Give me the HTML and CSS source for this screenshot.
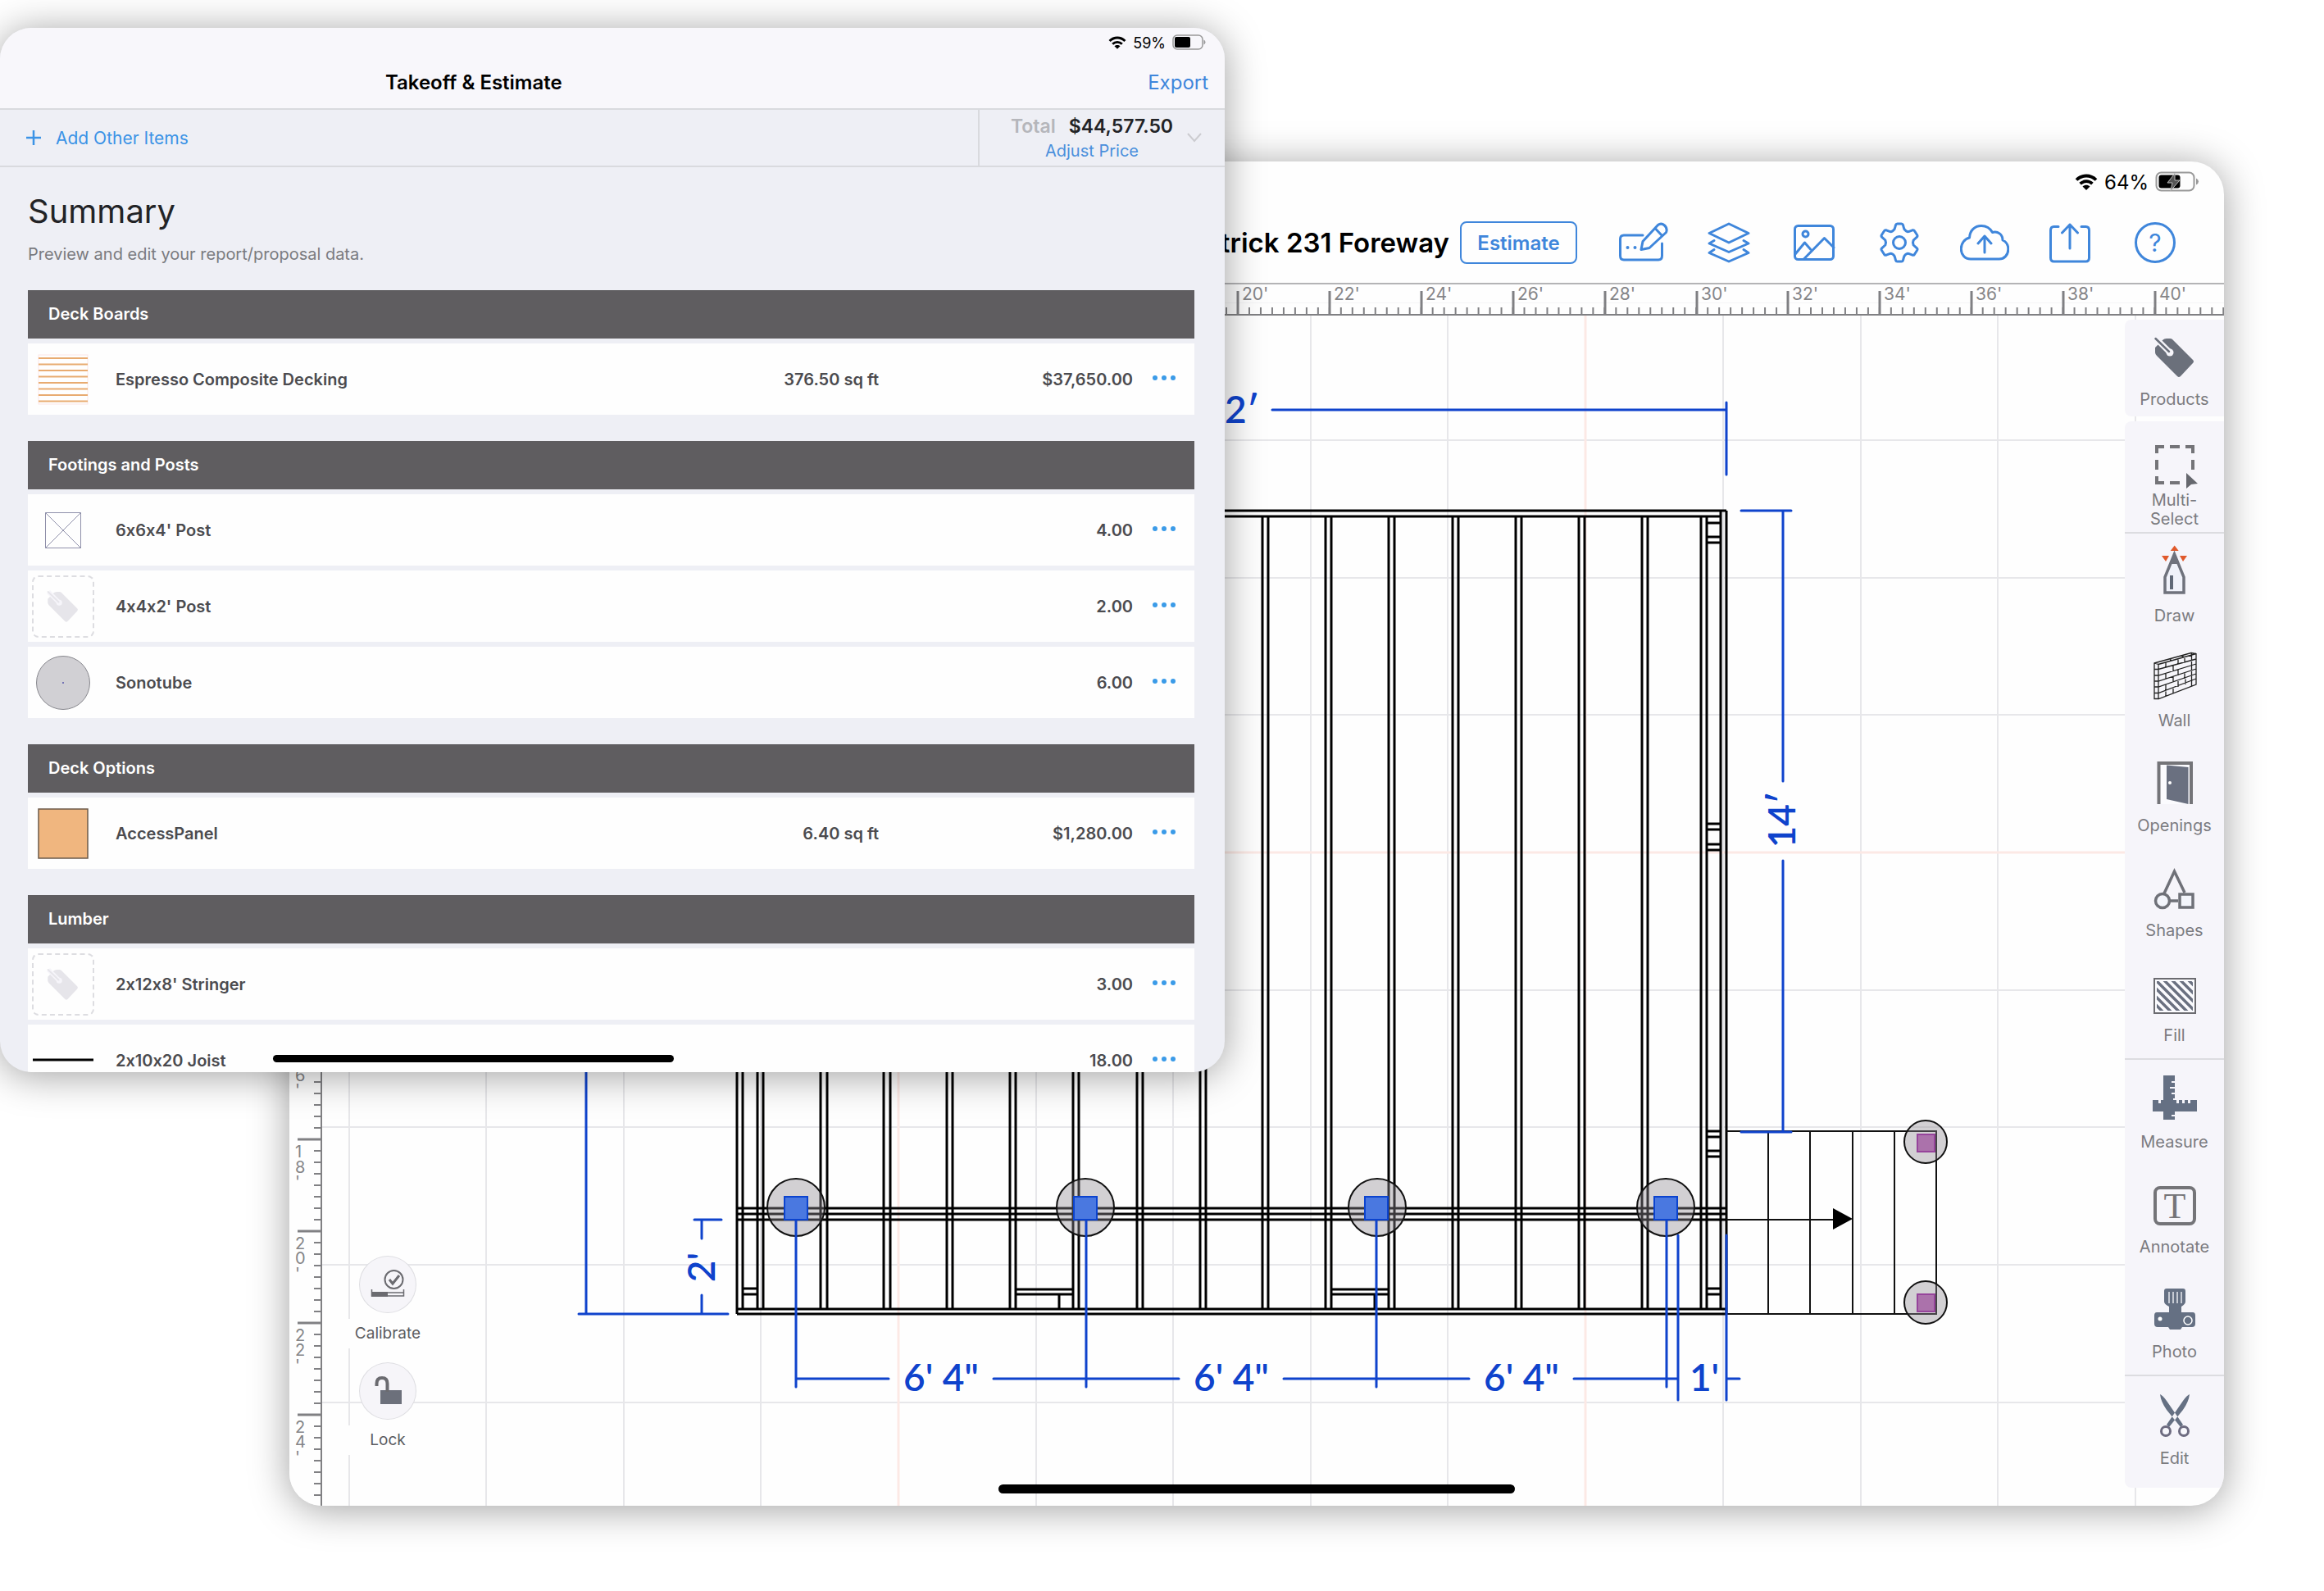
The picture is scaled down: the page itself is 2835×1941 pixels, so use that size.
FILE: index.html
```html
<!DOCTYPE html>
<html lang="en">
<head>
<meta charset="utf-8">
<title>Takeoff &amp; Estimate</title>
<link rel="stylesheet" href="styles.css">
</head>
<body>
<svg class="defs" aria-hidden="true">
  <defs>
    <symbol id="wifi" viewBox="0 0 28 20">
      <path d="M2 7.500C9 .8 19 .8 26 7.500M6.600 12.200c4.300-4 10.500-4 14.800 0" fill="none" stroke="currentColor" stroke-width="3.800"/>
      <path d="M14 20l-4.500-4.600c2.500-2.200 6.500-2.200 9 0z" fill="currentColor"/>
    </symbol>
    <symbol id="tag" viewBox="0 0 64 64">
      <path d="M17 11q2-2 5-2h4q2 0 3 1l25 25q2 2 0 4L39 55q-2 2-4 0L10 30q-2-2-2-4v-6z" fill="currentColor"/>
      <circle cx="26" cy="26" r="4.500" class="tag-gap-fill"/>
      <path d="M9 9l17 17" class="tag-gap" stroke-width="7"/>
      <path d="M8.500 9L25 25" stroke="currentColor" stroke-width="2.500" stroke-linecap="round"/>
    </symbol>
    <symbol id="dots" viewBox="0 0 30 8">
      <circle cx="4" cy="4" r="3" fill="currentColor"/><circle cx="15" cy="4" r="3" fill="currentColor"/><circle cx="26" cy="4" r="3" fill="currentColor"/>
    </symbol>
  </defs>
</svg>

<main class="desktop">
  <section class="plan" aria-label="Plan editor">
    <div class="status status-large">
      <svg class="wifi-large"><use href="#wifi"/></svg>
      <span>64%</span>
      <svg class="battery-large" viewBox="0 0 54 26">
        <rect x="1.500" y="1.500" width="46" height="22" rx="6" fill="none" stroke="#999" stroke-width="2"/>
        <rect x="4.500" y="4.500" width="26" height="16" rx="3" fill="#000"/>
        <path d="M50 8.500q3 1.500 3 4t-3 4z" fill="#999"/>
        <path d="M24 2.500L15 14h6l-2 9.500L30 11h-6z" fill="#555" stroke="#bbb" stroke-width="1"/>
      </svg>
    </div>
    <header class="plan-nav">
      <h2 class="plan-title">Patrick 231 Foreway</h2>
      <button class="estimate" type="button">Estimate</button>
      <nav class="plan-actions" aria-label="Plan actions">
        <button type="button" aria-label="Rename"><svg viewBox="0 0 60 60"><path d="M29 21H6q-4.500 0-4.500 4.500V46q0 5 4.500 5h42q4.500 0 4.500-5V31"/><path d="M27 38.500l2-10L47.500 8.500q4-3 8 .5t2 8.500L37 36.500zM44 12.500l8.500 9"/><circle class="solid" cx="10.500" cy="36" r="2"/><circle class="solid" cx="19.500" cy="36" r="2"/></svg></button>
        <button type="button" aria-label="Layers"><svg viewBox="0 0 60 60"><path d="M30 7l24 11.500L30 30 6 18.500zM12 27.500l-6 3.500 24 10.500L54 31l-6-3.500M12 38.500L6 42.500 30 53l24-10.500-6-4"/></svg></button>
        <button type="button" aria-label="Images"><svg viewBox="0 0 60 60"><rect x="6.500" y="9.500" width="47" height="41" rx="4"/><circle cx="19.500" cy="19.500" r="3.500"/><path d="M7 44l11.500-14 7 8M17.500 50L42.500 24.500 54 36"/></svg></button>
        <button type="button" aria-label="Settings"><svg viewBox="0 0 60 60"><path d="M24 13.600Q25 11 25.500 8.500q.5-1.600 2-1.600h5q1.500 0 2 1.600Q35 11 36 13.600q2.500 3.400 5.200 3L46 14.800q1.700-.5 2.500 1l3.200 5q.8 1.400-.5 2.600L47.200 27q-1.400 3 0 6l4 3.600q1.300 1.200.5 2.600l-3.200 5q-.8 1.500-2.500 1l-4.800-1.800q-2.700-.4-5.200 3-1 2.600-1.500 5.100-.5 1.600-2 1.600h-5q-1.500 0-2-1.600-.5-2.500-1.500-5.100-2.500-3.400-5.200-3L14 45.200q-1.700.5-2.500-1l-3.200-5q-.8-1.400.5-2.600l4-3.600q1.400-3 0-6l-4-3.600q-1.300-1.200-.5-2.600l3.200-5q.8-1.500 2.500-1l4.800 1.800q2.700.4 5.200-3z"/><circle cx="30" cy="30" r="7.500"/></svg></button>
        <button type="button" aria-label="Upload"><svg viewBox="0 0 60 60"><path d="M13 50C5.500 50 1.300 44 1.300 37.500S5.500 25.500 11.500 24C12 15 18 9.500 26 9.500c6.500 0 11 3.500 13.500 8C46 15.500 52 20 52 27c4.500 2 6.800 6 6.800 11 0 7-4.800 12-11 12zM30 42V22M22 31l8-9 8 9"/></svg></button>
        <button type="button" aria-label="Share"><svg viewBox="0 0 60 60"><path d="M16 10.500h-5.500Q6.500 10.500 6.500 15v33.500q0 4.500 4 4.500h39q4 0 4-4.500V15q0-4.500-4-4.500H44M30 37V8M20.500 18L30 8l9.500 10"/></svg></button>
        <button type="button" aria-label="Help"><svg viewBox="0 0 60 60"><circle cx="30" cy="30" r="23.500"/><text x="30" y="41" text-anchor="middle">?</text></svg></button>
      </nav>
    </header>
    <svg class="ruler-top" aria-hidden="true">
      <defs><pattern id="tickx" patternUnits="userSpaceOnUse" x="1156" y="0" width="13.980" height="38"><rect x="0" y="28" width="2" height="10"/></pattern></defs>
      <rect x="0" y="22" width="100%" height="1" fill="#f4f4f6"/>
      <rect width="100%" height="38" fill="url(#tickx)"/>
      <rect y="36" width="100%" height="2"/>
      <path d="M1157 8v30M1269 8v30M1381 8v30M1493 8v30M1605 8v30M1717 8v30M1828 8v30M1940 8v30M2052 8v30M2164 8v30M2276 8v30"/>
      <text x="1162" y="19">20'</text><text x="1274" y="19">22'</text><text x="1386" y="19">24'</text><text x="1498" y="19">26'</text><text x="1610" y="19">28'</text><text x="1722" y="19">30'</text><text x="1833" y="19">32'</text><text x="1945" y="19">34'</text><text x="2057" y="19">36'</text><text x="2169" y="19">38'</text><text x="2281" y="19">40'</text>
    </svg>
    <div class="plan-body">
      <svg class="drawing" viewBox="353 385 2360 1452" preserveAspectRatio="xMidYMid slice" role="img" aria-label="Deck framing plan">
        <g class="grid">
          <path d="M426 385V1837M593 385V1837M761 385V1837M928 385V1837M1264 385V1837M1431 385V1837M1599 385V1837M1766 385V1837M2102 385V1837M2270 385V1837M2437 385V1837M2605 385V1837M393 537H2713M393 705H2713M393 872H2713M393 1208H2713M393 1375H2713M393 1543H2713M393 1711H2713"/>
          <path class="axis" d="M1096 385V1837M1934 385V1837M393 1040H2713"/>
        </g>
        <g class="frame">
          <path d="M899 623H2106M899 630H2099M899 1597H2106M899 1603H2106"/>
          <path d="M899 623V1603M906 630V1597M924 630V1597M931 630V1597M2106 623V1603M2099 623V1597M2082 630V1597M2075 630V1597"/>
          <path d="M1001 630V1597M1009 630V1597M1078 630V1597M1086 630V1597M1155 630V1597M1162 630V1597M1232 630V1597M1239 630V1597M1309 630V1597M1316 630V1597M1387 630V1597M1394 630V1597M1464 630V1597M1471 630V1597M1540 630V1597M1547 630V1597M1617 630V1597M1624 630V1597M1694 630V1597M1701 630V1597M1772 630V1597M1779 630V1597M1849 630V1597M1856 630V1597M1926 630V1597M1933 630V1597M2003 630V1597M2010 630V1597"/>
          <path d="M899 1474H2106M899 1481H2106M899 1488H2106"/>
          <path d="M906 1572h18M906 1579h18M1239 1573h70M1239 1579h70M1292 1579v18M1624 1573h70M1624 1579h70M1677 1579v18"/>
          <path d="M2082 638h17M2082 655h17M2082 662h17M2082 1005h17M2082 1012h17M2082 1030h17M2082 1037h17M2082 1380h17M2082 1387h17M2082 1404h17M2082 1411h17M2082 1572h17M2082 1579h17"/>
        </g>
        <g class="stairs">
          <path d="M2106 1380H2362V1603H2106M2157 1380V1603M2208 1380V1603M2260 1380V1603M2311 1380V1603M2106 1488H2240"/>
          <path class="arrow" d="M2236 1474L2260 1487 2236 1500z"/>
        </g>
        <g class="footing">
          <circle cx="971" cy="1473" r="35"/><circle cx="1324" cy="1473" r="35"/><circle cx="1680" cy="1473" r="35"/><circle cx="2032" cy="1473" r="35"/>
          <circle cx="2349" cy="1393" r="26"/><circle cx="2349" cy="1589" r="26"/>
        </g>
        <g class="post">
          <rect x="957" y="1460" width="28" height="28"/><rect x="1310" y="1460" width="28" height="28"/><rect x="1665" y="1460" width="28" height="28"/><rect x="2018" y="1460" width="28" height="28"/>
        </g>
        <g class="post stair-post"><rect x="2339" y="1384" width="21" height="21"/><rect x="2339" y="1579" width="21" height="21"/></g>
        <g class="dims">
          <path d="M1552 500H2106M2106 491V579M2124 623H2185M2175 623V953M2175 1050V1380M2124 1381H2185M715 623V1603M706 1603H888M847 1488H880M856 1488V1511M856 1580V1603"/>
          <path d="M971 1682H1084M1212 1682H1438M1566 1682H1792M1920 1682H2047M2106 1682H2122M971 1489V1692M1325 1489V1692M1679 1489V1692M2033 1489V1692M2047 1507V1708M2106 1507V1708"/>
          <text x="1536" y="516" text-anchor="end">22′</text>
          <text x="1148" y="1697" text-anchor="middle">6' 4"</text>
          <text x="1502" y="1697" text-anchor="middle">6' 4"</text>
          <text x="1856" y="1697" text-anchor="middle">6' 4"</text>
          <text x="2079" y="1697" text-anchor="middle">1'</text>
          <text transform="translate(2190 1000) rotate(-90)" text-anchor="middle">14′</text>
          <text transform="translate(872 1546) rotate(-90)" text-anchor="middle">2'</text>
        </g>
      </svg>
      <svg class="ruler-side" aria-hidden="true">
        <defs><pattern id="ticky" patternUnits="userSpaceOnUse" x="0" y="1004" width="40" height="14"><rect x="30" y="0" width="10" height="2"/></pattern></defs>
        <rect width="40" height="100%" fill="url(#ticky)"/>
        <rect x="38" width="2" height="100%"/>
        <path d="M10 893h30M10 1005h30M10 1117h30M10 1229h30M10 1341h30"/>
        <text><tspan x="7" y="915">1</tspan><tspan x="7" y="934">6</tspan><tspan x="7" y="952">'</tspan></text>
        <text><tspan x="7" y="1027">1</tspan><tspan x="7" y="1046">8</tspan><tspan x="7" y="1064">'</tspan></text>
        <text><tspan x="7" y="1139">2</tspan><tspan x="7" y="1157">0</tspan><tspan x="7" y="1176">'</tspan></text>
        <text><tspan x="7" y="1251">2</tspan><tspan x="7" y="1269">2</tspan><tspan x="7" y="1288">'</tspan></text>
        <text><tspan x="7" y="1363">2</tspan><tspan x="7" y="1381">4</tspan><tspan x="7" y="1400">'</tspan></text>
      </svg>
      <div class="floating">
        <button type="button"><svg viewBox="0 0 68 68"><circle cx="41.500" cy="28" r="11" fill="none" stroke="#6b6b70" stroke-width="2"/><path d="M36 28l4 5 8-10" fill="none" stroke="#6b6b70" stroke-width="3"/><path d="M14.500 40v8h39v-8M14 44h40" fill="none" stroke="#6b6b70" stroke-width="1.500"/><rect x="14" y="43" width="20" height="6" fill="#6b6b70"/></svg><span>Calibrate</span></button>
        <button type="button"><svg viewBox="0 0 68 68"><rect x="25" y="33" width="26" height="17" fill="#6c707b"/><path d="M20.500 28v-3q0-7 6.500-7t6.500 7v10" fill="none" stroke="#6b6b70" stroke-width="4"/></svg><span>Lock</span></button>
      </div>
      <aside class="tools" aria-label="Tools">
        <div class="tools-card tools-products">
          <button class="tool" type="button"><svg viewBox="0 0 64 64"><use href="#tag"/></svg><span>Products</span></button>
        </div>
        <div class="tools-card tools-main">
          <div class="tool-group">
            <button class="tool tool-multi" type="button"><svg viewBox="0 0 64 64"><path d="M10 18v-8h9M26 10h12M45 10h9v8M54 26v12M10 26v12M10 46v8h9M26 54h12" fill="none" stroke="#747478" stroke-width="4"/><path d="M46 42l14 13-8 1-6 5z" fill="#66686e"/></svg><span>Multi-<br>Select</span></button>
          </div>
          <div class="tool-group">
            <button class="tool" type="button"><svg viewBox="0 0 64 64"><path d="M31.700-1.500l5 6.500h-10zM16 11h9l-4 7zM38 11h9l-5 7z" fill="#e0592b"/><path d="M31.500 9L20 37v19h23V37z" fill="#f0f2fa" stroke="#6f727c" stroke-width="3.500"/><path d="M31.500 7l-6 14h12z" fill="#6f727c"/><rect x="26" y="35" width="4" height="17" fill="#5f6877"/></svg><span>Draw</span></button>
            <button class="tool" type="button"><svg viewBox="0 0 64 64"><path d="M7 14L52 1.500l6 1V40L12.500 57.500H7zM7 14l5 1.500v42M12 15.500L58 2.500M7 21.500h5L58 9M7 29h5l46-14M7 36h5l46-15M7 43h5l46-16M7 50.500h5L58 33M52.500 1.500V42M27 8.500v2.500M42 4.500V7M21 19v-6M36 15V8.500M30 24v-7M44 13.500V6.500M21 26.500v7M36 22v7M30 30.500v7M44 26.500v6.500M21 40.500v7M36 36v7M30 45v6.500M45 33.500v6.500M21 48.500v6" fill="none" stroke="#222" stroke-width="1.300"/></svg><span>Wall</span></button>
            <button class="tool" type="button"><svg viewBox="0 0 64 64"><rect x="14" y="8" width="36" height="50" fill="#fbfbfe"/><path d="M12.500 58V8h39.500v50" fill="none" stroke="#747478" stroke-width="4"/><path d="M22 10.500l26.500 2.500v45L22 52z" fill="#6a7080"/><circle cx="26" cy="32" r="2" fill="#fff"/></svg><span>Openings</span></button>
            <button class="tool" type="button"><svg viewBox="0 0 64 64"><path d="M19 39L31.500 12 44 38M26 48h10" fill="none" stroke="#6f7178" stroke-width="3.500"/><circle cx="17" cy="48" r="8.500" fill="#f3f5fb" stroke="#6f7178" stroke-width="3.500"/><rect x="38" y="40" width="16" height="16" fill="#f3f5fb" stroke="#6f7178" stroke-width="3.500"/></svg><span>Shapes</span></button>
            <button class="tool" type="button"><svg viewBox="0 0 64 64"><defs><clipPath id="hatch"><rect x="10" y="18" width="44" height="36"/></clipPath></defs><rect x="7" y="15" width="50" height="42" fill="#fbfbfe" stroke="#6b6b70" stroke-width="2"/><path clip-path="url(#hatch)" d="M4 42l18 18M4 32l28 28M4 22l38 38M4 12l48 48M14 12l48 48M24 12l38 38M34 12l28 28M44 12l18 18" stroke="#6a7080" stroke-width="3.500"/></svg><span>Fill</span></button>
          </div>
          <div class="tool-group">
            <button class="tool" type="button"><svg viewBox="0 0 64 64"><path d="M18 3h14v7h-4v2h4v5h-6v2h6v5h-4v2h4v5h-2v2h4v4h3v-4h4v4h3v-4h4v4h3v-4h8v14H32v4h-4v2h4v4H18V47H5V33h7v4h3v-4h3z" fill="#657083"/></svg><span>Measure</span></button>
            <button class="tool" type="button"><svg viewBox="0 0 64 64"><rect x="8" y="12" width="48" height="44" rx="6" fill="none" stroke="#747478" stroke-width="4"/><text x="32" y="49" text-anchor="middle">T</text></svg><span>Annotate</span></button>
            <button class="tool" type="button"><svg viewBox="0 0 64 64"><path d="M19 10q0-3 3-3h20q3 0 3 3v13q0 3-5 6v7h14q3 0 3 4v10q0 4-4 4H41l-2 3H26l-2-3H11q-4 0-4-4V40q0-4 3-4h15v-7q-6-3-6-6z" fill="#657083"/><path d="M25 11v14M30 11v14M35 11v14M40 11v14" stroke="#e6e8ee" stroke-width="1.500"/><circle cx="14" cy="44" r="2.500" fill="#fff"/><circle cx="48" cy="46" r="5" fill="none" stroke="#fff" stroke-width="1.500"/></svg><span>Photo</span></button>
          </div>
          <div class="tool-group">
            <button class="tool" type="button"><svg viewBox="0 0 64 64"><path d="M14 6q1 9 8 19l17 21 3-3L22 14Q17 7 14 6zM50 6q-1 9-8 19L25 46l-3-3 20-29q5-7 8-8z" fill="#657083"/><circle cx="21" cy="51" r="5.500" fill="#f7f7fc" stroke="#6d6b80" stroke-width="3"/><circle cx="43" cy="51" r="5.500" fill="#f7f7fc" stroke="#6d6b80" stroke-width="3"/></svg><span>Edit</span></button>
          </div>
        </div>
      </aside>
      <div class="home-bar"></div>
    </div>
  </section>

  <section class="report" aria-label="Takeoff and estimate">
    <header class="report-head">
      <div class="status">
        <svg class="wifi"><use href="#wifi"/></svg>
        <span>59%</span>
        <svg class="battery" viewBox="0 0 41 20">
          <rect x="1" y="1" width="36" height="17" rx="5" fill="none" stroke="#999" stroke-width="1.500"/>
          <rect x="3" y="3" width="19" height="13" rx="2" fill="#000"/>
          <path d="M38.500 6.500q2 1 2 3t-2 3z" fill="#999"/>
        </svg>
      </div>
      <div class="title-row">
        <h1 class="report-title">Takeoff &amp; Estimate</h1>
        <button class="export" type="button">Export</button>
      </div>
    </header>
    <div class="report-bar">
      <button class="add" type="button"><svg viewBox="0 0 20 20"><path d="M10 1v18M1 10h18" stroke="currentColor" stroke-width="2.500"/></svg>Add Other Items</button>
      <div class="total">
        <div class="total-text">
          <p class="total-line"><span>Total</span><strong>$44,577.50</strong></p>
          <button class="adjust" type="button">Adjust Price</button>
        </div>
        <svg class="chevron" viewBox="0 0 18 12"><path d="M1 1l8 9 8-9" fill="none" stroke="#ccccd0" stroke-width="2"/></svg>
      </div>
    </div>
    <div class="report-body">
      <h2 class="summary">Summary</h2>
      <p class="hint">Preview and edit your report/proposal data.</p>

      <table class="group">
        <caption>Deck Boards</caption>
        <colgroup><col class="c-thumb"><col><col class="c-qty"><col class="c-price"><col class="c-menu"></colgroup>
        <tbody><tr>
          <td><svg class="thumb" viewBox="0 0 76 76"><rect x="8" y="8" width="60" height="60" fill="none" stroke="#fbe6e6"/><path d="M8 12h60M8 19.500h60M8 27h60M8 34.500h60M8 42h60M8 49.500h60M8 57h60M8 64.500h60" stroke="#e8ab70" stroke-width="2"/></svg></td>
          <th scope="row">Espresso Composite Decking</th><td class="num">376.50 sq ft</td><td class="num">$37,650.00</td>
          <td class="menu"><button type="button" aria-label="More"><svg><use href="#dots"/></svg></button></td>
        </tr></tbody>
      </table>

      <table class="group">
        <caption>Footings and Posts</caption>
        <colgroup><col class="c-thumb"><col><col class="c-qty"><col class="c-price"><col class="c-menu"></colgroup>
        <tbody>
          <tr>
            <td><svg class="thumb" viewBox="0 0 76 76"><path d="M16.500 16.500h43v43h-43zl43 43M59.500 16.500l-43 43" fill="none" stroke="#8f90aa"/></svg></td>
            <th scope="row">6x6x4' Post</th><td></td><td class="num">4.00</td>
            <td class="menu"><button type="button" aria-label="More"><svg><use href="#dots"/></svg></button></td>
          </tr>
          <tr>
            <td><span class="thumb placeholder"><svg viewBox="0 0 64 64"><use href="#tag"/></svg></span></td>
            <th scope="row">4x4x2' Post</th><td></td><td class="num">2.00</td>
            <td class="menu"><button type="button" aria-label="More"><svg><use href="#dots"/></svg></button></td>
          </tr>
          <tr>
            <td><svg class="thumb" viewBox="0 0 76 76"><circle cx="38" cy="38" r="32.500" fill="#d1d0d4" stroke="#88888e"/><circle cx="38" cy="38" r="1" fill="#55a"/></svg></td>
            <th scope="row">Sonotube</th><td></td><td class="num">6.00</td>
            <td class="menu"><button type="button" aria-label="More"><svg><use href="#dots"/></svg></button></td>
          </tr>
        </tbody>
      </table>

      <table class="group">
        <caption>Deck Options</caption>
        <colgroup><col class="c-thumb"><col><col class="c-qty"><col class="c-price"><col class="c-menu"></colgroup>
        <tbody><tr>
          <td><svg class="thumb" viewBox="0 0 76 76"><rect x="8" y="8" width="60" height="60" fill="#f0b67f" stroke="#6b5a4a" stroke-width="1.500"/></svg></td>
          <th scope="row">AccessPanel</th><td class="num">6.40 sq ft</td><td class="num">$1,280.00</td>
          <td class="menu"><button type="button" aria-label="More"><svg><use href="#dots"/></svg></button></td>
        </tr></tbody>
      </table>

      <table class="group">
        <caption>Lumber</caption>
        <colgroup><col class="c-thumb"><col><col class="c-qty"><col class="c-price"><col class="c-menu"></colgroup>
        <tbody>
          <tr>
            <td><span class="thumb placeholder"><svg viewBox="0 0 64 64"><use href="#tag"/></svg></span></td>
            <th scope="row">2x12x8' Stringer</th><td></td><td class="num">3.00</td>
            <td class="menu"><button type="button" aria-label="More"><svg><use href="#dots"/></svg></button></td>
          </tr>
          <tr>
            <td><svg class="thumb" viewBox="0 0 76 76"><path d="M1 37h74" stroke="#000" stroke-width="3"/></svg></td>
            <th scope="row">2x10x20 Joist</th><td></td><td class="num">18.00</td>
            <td class="menu"><button type="button" aria-label="More"><svg><use href="#dots"/></svg></button></td>
          </tr>
        </tbody>
      </table>
    </div>
    <div class="report-home-bar"></div>
  </section>
</main>
</body>
</html>
```
FILE: styles.css
```css
:root {
  --blue: #3f86db;
  --dim: #0f43cc;
  --surface: #eeeff5;
  --tools: #f6f5fa;
  --line: #d9dade;
}

* { box-sizing: border-box; }

body {
  margin: 0;
  background: #fff;
  color: #000;
  font-family: Inter, "Liberation Sans", sans-serif;
  font-feature-settings: "calt" 0;
}

h1, h2, p { margin: 0; }

button {
  border: 0;
  padding: 0;
  background: none;
  color: inherit;
  font: inherit;
  font-feature-settings: inherit;
}

svg { display: block; }
.defs { position: absolute; width: 0; height: 0; }

.desktop {
  position: relative;
  display: flex;
  min-height: 100vh;
  padding: 197px 122px 104px 353px;
  overflow: hidden;
}

/* Plan editor window */
.plan {
  display: flex;
  flex: 1;
  flex-direction: column;
  overflow: hidden;
  border-radius: 40px;
  background: #fefefe;
  box-shadow: 0 4px 48px rgba(0, 0, 0, .38);
}

.status {
  display: flex;
  align-items: center;
  justify-content: flex-end;
  gap: 8px;
  height: 36px;
  padding-right: 23px;
  font-size: 18px;
}
.wifi { width: 22px; height: 16px; }
.battery { width: 41px; height: 20px; }

.status-large {
  height: 50px;
  padding-right: 30px;
  font-size: 24px;
}
.wifi-large { width: 28px; height: 20px; }
.battery-large { width: 54px; height: 26px; }

.plan-nav {
  display: flex;
  align-items: center;
  justify-content: flex-end;
  height: 100px;
  padding-right: 54px;
  border-bottom: 2px solid #b4b4b6;
}
.plan-title {
  margin-right: 13px;
  font-size: 33px;
  font-weight: 600;
  white-space: nowrap;
}
.estimate {
  width: 143px;
  height: 52px;
  margin-right: 51px;
  border: 2px solid var(--blue);
  border-radius: 8px;
  color: var(--blue);
  font-size: 24px;
  font-weight: 600;
}
.plan-actions { display: flex; gap: 44px; }
.plan-actions svg {
  width: 60px;
  height: 60px;
  fill: none;
  stroke: var(--blue);
  stroke-width: 3;
  stroke-linejoin: round;
  stroke-linecap: round;
}
.plan-actions .solid { fill: var(--blue); stroke: none; }
.plan-actions text {
  fill: var(--blue);
  stroke: none;
  font-size: 30px;
}

.ruler-top { width: 100%; height: 38px; }
.ruler-top, .ruler-side { fill: #808083; }
.ruler-top path, .ruler-side path { stroke: #808083; stroke-width: 3; }
.ruler-top text { fill: #858588; font-size: 21px; }
.ruler-side text { fill: #858588; font-size: 20px; }

.plan-body {
  position: relative;
  display: flex;
  flex: 1;
  justify-content: space-between;
}
.drawing {
  position: absolute;
  inset: 0;
  width: 100%;
  height: 100%;
}
.ruler-side {
  position: relative;
  align-self: stretch;
  width: 40px;
  height: auto;
  background: #fefefe;
}

.grid path { fill: none; stroke: #e7e7ea; stroke-width: 2; }
.grid .axis { stroke: #fce9e5; stroke-width: 3; }
.frame path { fill: none; stroke: #000; stroke-width: 3; }
.stairs path { fill: none; stroke: #111; stroke-width: 2; }
.stairs .arrow { fill: #000; stroke: none; }
.footing circle { fill: rgba(145, 140, 148, .4); stroke: #111; stroke-width: 2; }
.post rect { fill: #4a78e0; stroke: #0b43cf; stroke-width: 2; }
.stair-post rect { fill: #ab72ab; stroke: #96449b; }
.dims path { fill: none; stroke: var(--dim); stroke-width: 3; stroke-linecap: round; }
.dims text {
  fill: var(--dim);
  font-family: Lato, "Liberation Sans", sans-serif;
  font-size: 46px;
  font-weight: 600;
}

.floating {
  position: absolute;
  bottom: 62px;
  left: 70px;
  display: flex;
  flex-direction: column;
  gap: 18px;
}
.floating button {
  display: flex;
  flex-direction: column;
  align-items: center;
  gap: 8px;
  width: 100px;
}
.floating svg {
  width: 68px;
  height: 68px;
  border-radius: 50%;
  background: #f6f5f9;
  box-shadow: 0 0 0 1px #dedee2;
}
.floating span {
  width: 100px;
  background: #fefefe;
  color: #5c5c60;
  font-size: 19px;
  line-height: 36px;
}

.tools {
  position: relative;
  display: flex;
  flex-direction: column;
  gap: 6px;
  width: 121px;
  padding-top: 5px;
}
.tools-card { border-radius: 8px 0 0 8px; background: var(--tools); }
.tools-main { padding-bottom: 8px; }
.tool {
  display: flex;
  flex-direction: column;
  align-items: center;
  gap: 8px;
  width: 100%;
  padding: 16px 0;
  color: #7b7b80;
  font-size: 20px;
  line-height: 24px;
}
.tool svg { width: 64px; height: 64px; overflow: visible; color: #6b707b; }
.tool text {
  fill: #747478;
  font-family: "Liberation Serif", serif;
  font-size: 44px;
}
.tool-group + .tool-group { border-top: 2px solid #dcdce0; }
.tools-products .tool { padding: 14px 0 9px; gap: 7px; }
.tool-multi { gap: 0; padding: 21px 0 4px; line-height: 23px; }
.tag-gap-fill { fill: #f6f5fa; }
.tag-gap { stroke: #f6f5fa; }

.home-bar {
  position: absolute;
  bottom: 15px;
  left: 865px;
  width: 630px;
  height: 11px;
  border-radius: 6px;
  background: #000;
}

/* Takeoff report window */
.report {
  position: absolute;
  top: 34px;
  bottom: 633px;
  left: 0;
  display: flex;
  flex-direction: column;
  width: 52.7%;
  overflow: hidden;
  border-radius: 38px;
  background: var(--surface);
  box-shadow: 0 4px 48px rgba(0, 0, 0, .38);
}
.report-head {
  flex-shrink: 0;
  padding-bottom: 2px;
  border-bottom: 2px solid var(--line);
  background: #f8f7fb;
}
.title-row {
  display: flex;
  align-items: center;
  justify-content: space-between;
  height: 60px;
  padding-right: 20px;
}
.report-title {
  flex: 0 0 78.4%;
  font-size: 24px;
  font-weight: 600;
  text-align: center;
}
.export { color: var(--blue); font-size: 24px; }

.report-bar {
  display: flex;
  flex-shrink: 0;
  justify-content: space-between;
  height: 70px;
  border-bottom: 2px solid var(--line);
}
.add {
  display: flex;
  align-items: center;
  gap: 17px;
  padding-left: 31px;
  color: #3b93e6;
  font-size: 21px;
}
.add svg { width: 20px; height: 20px; }
.total {
  display: flex;
  align-items: center;
  justify-content: flex-end;
  gap: 17px;
  width: 301px;
  padding-right: 28px;
  border-left: 2px solid var(--line);
}
.total-text { display: flex; flex-direction: column; align-items: center; }
.total-line {
  display: flex;
  gap: 16px;
  color: #b5b6bb;
  font-size: 23px;
  font-weight: 600;
  line-height: 32px;
}
.total-line strong { color: #222326; font-weight: 600; }
.adjust { color: #4a8fdc; font-size: 20px; line-height: 28px; }
.chevron { width: 18px; height: 12px; }

.report-body { flex-shrink: 0; padding: 26px 37px 0 34px; }
.summary {
  color: #222326;
  font-size: 40px;
  font-weight: 400;
  line-height: 56px;
}
.hint {
  margin: 12px 0 32px;
  color: #7a7b80;
  font-size: 20px;
  line-height: 24px;
}

.group {
  width: 100%;
  margin-bottom: 26px;
  border-spacing: 0 6px;
  table-layout: fixed;
  color: #4b4b4f;
  font-size: 20px;
  font-weight: 600;
}
.group caption {
  height: 59px;
  padding-left: 25px;
  background: #5f5d60;
  color: #fff;
  line-height: 59px;
  text-align: left;
}
.c-thumb { width: 86px; }
.c-qty { width: 300px; }
.c-price { width: 310px; }
.c-menu { width: 75px; }
.group td, .group th { height: 87px; padding: 0; background: #fefefe; }
.group th { padding-left: 21px; text-align: left; font-weight: 600; }
.group .num { text-align: right; }
.group .menu { padding-bottom: 4px; }
.thumb { width: 76px; height: 76px; margin: 0 auto; }
.placeholder {
  display: grid;
  place-items: center;
  border: 2px dashed #dddde1;
  border-radius: 8px;
  color: #e6e5ea;
}
.placeholder svg { width: 50px; height: 50px; }
.menu button { display: block; margin: 0 auto; color: #3b9be8; }
.menu svg { width: 30px; height: 8px; }

.report-home-bar {
  position: absolute;
  bottom: 12px;
  left: 333px;
  width: 489px;
  height: 9px;
  border-radius: 5px;
  background: #000;
}
```
